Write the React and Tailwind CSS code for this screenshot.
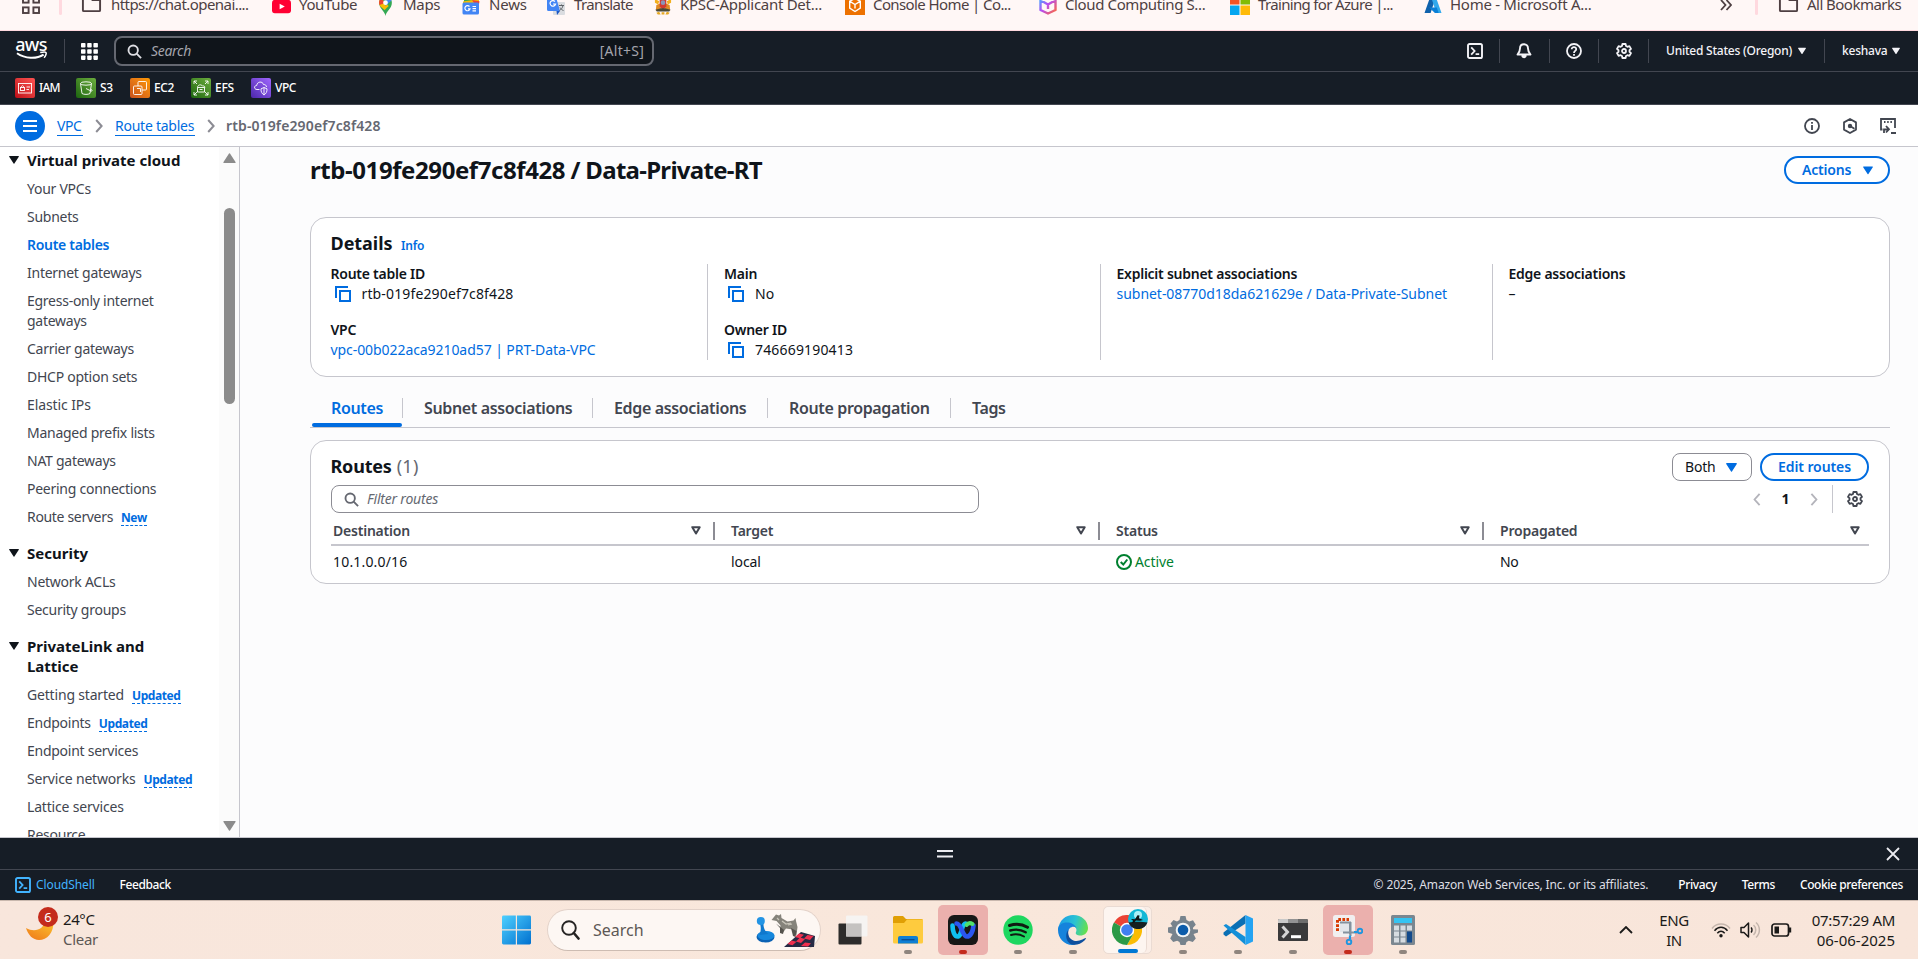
import React from "react";

/* ---------- shared icons ---------- */

function Caret({ className = "h-[8px] w-[10px]" }) {
  return (
    <svg viewBox="0 0 10 8" className={className} fill="currentColor">
      <path d="M0.6 0h8.8a0.5 0.5 0 0 1 .4.8L5.4 7.6a0.5 0.5 0 0 1-.8 0L.2.8A.5.5 0 0 1 .6 0z" />
    </svg>
  );
}

function SearchIcon({ className }) {
  return (
    <svg viewBox="0 0 16 16" className={className} fill="none" stroke="currentColor" strokeWidth="2">
      <circle cx="6.6" cy="6.6" r="5" />
      <path d="M10.3 10.3 15 15" />
    </svg>
  );
}

function ShellIcon({ className }) {
  return (
    <svg viewBox="0 0 16 16" className={className} fill="none" stroke="currentColor">
      <rect x="1" y="1" width="14" height="14" rx="1.6" strokeWidth="1.9" />
      <path d="M4.2 4.3 7.6 8l-3.4 3.7M8.6 11.2h3.6" strokeWidth="1.8" />
    </svg>
  );
}

function GearIcon({ className }) {
  return (
    <svg viewBox="0 0 16 16" className={className} fill="none" stroke="currentColor" strokeWidth="1.8" strokeLinejoin="round">
      <path d="M6.4 1h3.2l.4 2 1.400.8 2-.7 1.600 2.800L13.500 7.200v1.600l1.500 1.300-1.600 2.800-2-.7-1.400.8-.4 2H6.400L6 13l-1.400-.8-2 .7L1 10.100l1.500-1.300V7.200L1 5.900l1.600-2.800 2 .7L6 3z" />
      <circle cx="8" cy="8" r="2" />
    </svg>
  );
}

function CopyIcon() {
  return (
    <svg viewBox="0 0 16 16" className="h-[16px] w-[16px] text-[#006ce0]" fill="none" stroke="currentColor" strokeWidth="2">
      <path d="M1 12V1h12" />
      <rect x="5" y="5" width="10" height="10" />
    </svg>
  );
}

function Chevron({ className, dir = "right" }) {
  return (
    <svg viewBox="0 0 8 14" className={className} fill="none" stroke="currentColor" strokeWidth="2">
      <path d={dir === "right" ? "M1.200 1 6.600 7 1.200 13" : "M6.800 1 1.400 7 6.800 13"} />
    </svg>
  );
}

function FolderIcon({ className }) {
  return (
    <svg viewBox="0 0 22 20" className={className} fill="none" stroke="#4e3f42" strokeWidth="2" strokeLinejoin="round">
      <path d="M2 3.500A1.500 1.500 0 0 1 3.500 2H12v5H20V17.500A1 1 0 0 1 19 18.500H3A1 1 0 0 1 2 17.500z" />
    </svg>
  );
}

/* ---------- browser bookmarks ---------- */

function Bookmark({ slot, gap, track, label, children }) {
  return (
    <div className={`flex h-[20px] shrink-0 items-center ${slot}`}>
      <span className={`flex shrink-0 items-center ${gap}`}>{children}</span>
      <span className={`-ml-px -mt-[2px] whitespace-nowrap text-[15px] leading-[20px] text-[#4e3f42] ${track}`}>{label}</span>
    </div>
  );
}

function BookmarksBar() {
  return (
    <div className="h-[31px] shrink-0 overflow-hidden border-b border-[#ffd9df] bg-[#fff7f6]">
      <div className="-mt-[5px] flex h-[20px] items-center pl-[22px]">
        <svg viewBox="0 0 18 18" className="mr-[29px] h-[18px] w-[18px] shrink-0" fill="none" stroke="#4e3f42" strokeWidth="1.900">
          <rect x="1" y="1" width="5.600" height="5.600" />
          <rect x="11.400" y="1" width="5.600" height="5.600" />
          <rect x="1" y="11.400" width="5.600" height="5.600" />
          <rect x="11.400" y="11.400" width="5.600" height="5.600" />
        </svg>
        <div className="-ml-[10px] mr-[19px] h-[20px] w-[3px] shrink-0 rounded-b bg-[#ffd9df]" />
        <Bookmark slot="w-[191px]" gap="w-[31px] -mt-[4px]" track="tracking-[-0.56px]" label="https://chat.openai....">
          <FolderIcon className="h-[20px] w-[21px]" />
        </Bookmark>
        <Bookmark slot="w-[106px]" gap="w-[28px]" track="tracking-[-0.35px]" label="YouTube">
          <svg viewBox="0 0 20 14" className="mt-[2px] h-[15px] w-[19px]">
            <rect width="20" height="14" rx="3" fill="#ff0033" />
            <path d="M8 4l5.500 3L8 10z" fill="#fff" />
          </svg>
        </Bookmark>
        <Bookmark slot="w-[84px]" gap="w-[26px]" track="tracking-[-0.3px]" label="Maps">
          <svg viewBox="0 0 16 22" className="mt-[1px] h-[20px] w-[15px]">
            <path d="M8 22C7.300 17 1 14 1 7.500A7 7 0 0 1 15 7.500C15 14 8.700 17 8 22z" fill="#34a853" />
            <path d="M1 7.500A7 7 0 0 1 3 2.600L11.500 11 7 15.500 2.500 11.500A7 7 0 0 1 1 7.500z" fill="#fbbc04" />
            <path d="M3 2.600 8 7.500 1.500 10A7 7 0 0 1 3 2.600z" fill="#ea4335" />
            <path d="M8 .5A7 7 0 0 1 14.500 5L8 11z" fill="#4285f4" />
            <circle cx="8" cy="7.300" r="2.600" fill="#fff" />
          </svg>
        </Bookmark>
        <Bookmark slot="w-[85px]" gap="w-[28px]" track="tracking-[-0.2px]" label="News">
          <svg viewBox="0 0 18 18" className="mt-[1px] h-[18px] w-[18px]">
            <rect x="2" y="1" width="14" height="8" fill="#34a853" />
            <path d="M1 4.500 17 2v8H1z" fill="#fbbc04" />
            <path d="M10 3l7.500 1.200L16 12z" fill="#ea4335" />
            <rect x="0.500" y="5.500" width="16.500" height="12" rx="1.500" fill="#4285f4" />
            <path d="M7.500 9.500A2.600 2.600 0 1 0 8 11.800H6M10.500 9.500H14M10.500 11.700H14M10.500 13.900H14" stroke="#fff" strokeWidth="1.200" fill="none" />
          </svg>
        </Bookmark>
        <Bookmark slot="w-[106px]" gap="w-[28px]" track="tracking-[-0.62px]" label="Translate">
          <svg viewBox="0 0 18 18" className="mt-[1px] h-[18px] w-[18px]">
            <rect x="6" y="5" width="12" height="13" rx="1" fill="#dadce0" />
            <path d="M0 1.500A1.500 1.500 0 0 1 1.500 0H9l4 14H1.500A1.500 1.500 0 0 1 0 12.500z" fill="#4285f4" />
            <path d="M9.500 14H13l-3 4z" fill="#1a56c4" />
            <path d="M8 4.500A2.800 2.800 0 1 0 8.600 7H6" stroke="#fff" strokeWidth="1.200" fill="none" />
            <path d="M12 8.500h5M14.500 7.500v1M16 8.500c-.5 2.500-2 4-3.500 5M13 10.500c.8 1.500 2 2.500 3.500 3" stroke="#5f6368" strokeWidth="1" fill="none" />
          </svg>
        </Bookmark>
        <Bookmark slot="w-[192px]" gap="w-[28px]" track="tracking-[-0.28px]" label="KPSC-Applicant Det...">
          <svg viewBox="0 0 20 20" className="mt-[1px] h-[19px] w-[20px]">
            <path d="M1.500 3 6 5.500 5 9 1.500 7zM18.500 3 14 5.500 15 9l3.500-2z" fill="#f2b01e" />
            <path d="M3 9.500 7 8l1 6-5.500 1zM17 9.500 13 8l-1 6 5.500 1z" fill="#e08a22" />
            <path d="M6.500 3h7v8L10 15l-3.500-4z" fill="#d23a2f" />
            <circle cx="10" cy="7" r="2.400" fill="#8a94b8" />
            <path d="M2 14.500l6-1.500h4l6 1.500-1.500 1.800h-13z" fill="#4b4a38" />
            <path d="M3 17.500l3-.8 1.500 2.800h-3zM8.500 17h3v2.500h-3zM17 17.500l-3-.8-1.500 2.800h3z" fill="#e5a823" />
          </svg>
        </Bookmark>
        <Bookmark slot="w-[194px]" gap="w-[29px]" track="tracking-[-0.6px]" label="Console Home | Co...">
          <svg viewBox="0 0 20 20" className="h-[20px] w-[20px]" fill="none">
            <rect width="20" height="20" fill="#ed7100" />
            <path d="M10 3.500l5.300 2.700v7L10 16.500l-5.300-3.300v-7zM4.900 6.300 10 9.500l5.100-3.200M10 9.500v4" stroke="#fff" strokeWidth="1.400" />
          </svg>
        </Bookmark>
        <Bookmark slot="w-[191px]" gap="w-[27px]" track="tracking-[-0.38px]" label="Cloud Computing S...">
          <svg viewBox="0 0 18 20" className="h-[20px] w-[18px]" fill="none" strokeLinejoin="round">
            <defs>
              <linearGradient id="cube" x1="0" y1="0" x2="1" y2="1">
                <stop offset="0" stopColor="#3db8ff" />
                <stop offset=".45" stopColor="#b44cf5" />
                <stop offset="1" stopColor="#ff6a3d" />
              </linearGradient>
            </defs>
            <path d="M9 1.500 16.500 5v10L9 18.500 1.500 15V5zM2 5.500l7 4 7-4M9 9.500V14" stroke="url(#cube)" strokeWidth="2.400" />
          </svg>
        </Bookmark>
        <Bookmark slot="w-[194px]" gap="w-[29px]" track="tracking-[-0.66px]" label="Training for Azure |...">
          <svg viewBox="0 0 20 20" className="h-[20px] w-[20px]">
            <path d="M0 0h9.500v9.500H0z" fill="#f35325" />
            <path d="M10.500 0H20v9.500h-9.500z" fill="#81bc06" />
            <path d="M0 10.500h9.500V20H0z" fill="#05a6f0" />
            <path d="M10.500 10.500H20V20h-9.500z" fill="#ffba08" />
          </svg>
        </Bookmark>
        <Bookmark slot="w-[296px]" gap="w-[27px]" track="tracking-[-0.28px]" label="Home - Microsoft A...">
          <svg viewBox="0 0 18 18" className="h-[17px] w-[18px]">
            <path d="M6 0h6L6.500 17H0z" fill="#0f62ac" />
            <path d="M7 0h5l6 17h-5.500z" fill="#32a9ec" />
            <path d="M5 11h8l2 6h-4z" fill="#0a7fd6" />
          </svg>
        </Bookmark>
        <svg viewBox="0 0 12 12" className="mr-[23px] h-[12px] w-[12px] shrink-0" fill="none" stroke="#4e3f42" strokeWidth="1.800">
          <path d="M1 1l4.500 5L1 11M6.500 1 11 6l-4.500 5" />
        </svg>
        <div className="mr-[20px] h-[20px] w-[3px] shrink-0 rounded-b bg-[#ffd9df]" />
        <Bookmark slot="w-[140px]" gap="w-[30px] -mt-[4px]" track="tracking-[-0.53px]" label="All Bookmarks">
          <FolderIcon className="h-[20px] w-[21px]" />
        </Bookmark>
      </div>
    </div>
  );
}

/* ---------- AWS header ---------- */

function NavDivider({ className = "" }) {
  return <div className={`h-[24px] w-px shrink-0 bg-[#424650] ${className}`} />;
}

function Service({ slot, label, track, children, colors }) {
  return (
    <div className={`flex items-center gap-[4px] ${slot}`}>
      <div className={`flex h-[20px] w-[20px] shrink-0 items-center justify-center rounded-[2px] bg-linear-to-tr ${colors}`}>
        <svg viewBox="0 0 16 16" className="h-[16px] w-[16px]" fill="none" stroke="#fff" strokeWidth="0.9">
          {children}
        </svg>
      </div>
      <span className={`text-[12px] font-medium leading-[16px] text-white ${track}`}>{label}</span>
    </div>
  );
}

function AwsHeader() {
  return (
    <header className="shrink-0 bg-[#161d26] text-[#f3f3f7]">
      <div className="flex h-[41px] items-center border-b border-[#424650] pl-[15px]">
        <div className="flex w-[32px] flex-col items-center">
          <span className="-mt-[6px] text-[18px] font-medium leading-[16px] tracking-[-0.7px] text-white">aws</span>
          <svg viewBox="0 0 32 9" className="-mt-px h-[9px] w-[31px]" fill="none" stroke="#fff">
            <path d="M1 2.200c8.500 5.800 20 6.200 27.500 1.400" strokeWidth="2" />
            <path d="M25 1.500c3-.8 5.500-.7 6 0s-.3 3.500-2 5.300" strokeWidth="1.600" />
          </svg>
        </div>
        <NavDivider className="ml-[17px]" />
        <svg viewBox="0 0 17 17" className="ml-[16px] h-[17px] w-[17px]" fill="#fff">
          {[0, 6.2, 12.4].map((y) =>
            [0, 6.2, 12.4].map((x) => <rect key={`${x}-${y}`} x={x} y={y} width="4.500" height="4.500" rx=".8" />)
          )}
        </svg>
        <div className="ml-[16px] flex h-[30px] w-[540px] items-center rounded-[8px] border-2 border-[#656871] bg-[#0f141a] pl-[11px] pr-[8px]">
          <SearchIcon className="h-[15px] w-[15px] text-[#dedee3]" />
          <span className="ml-[9px] text-[14px] italic leading-[20px] tracking-[-0.3px] text-[#a4a4ad]">Search</span>
          <span className="ml-auto text-[14px] leading-[20px] tracking-[0.25px] text-[#a4a4ad]">[Alt+S]</span>
        </div>
        <ShellIcon className="ml-[813px] h-[16px] w-[16px]" />
        <NavDivider className="ml-[16px]" />
        <svg viewBox="0 0 16 16" className="ml-[16px] h-[16px] w-[16px]" fill="none" stroke="currentColor" strokeWidth="1.900" strokeLinejoin="round">
          <path d="M8 1.200c2.600 0 4 1.900 4 4.200 0 2.800.7 4 2.500 6.100h-13C3.300 9.400 4 8.200 4 5.400c0-2.300 1.400-4.200 4-4.200z" />
          <path d="M6.200 13c.2 1.600 3.400 1.600 3.600 0z" fill="currentColor" />
        </svg>
        <NavDivider className="ml-[17px]" />
        <svg viewBox="0 0 16 16" className="ml-[16px] h-[16px] w-[16px]" fill="none" stroke="currentColor" strokeWidth="1.800">
          <circle cx="8" cy="8" r="7" />
          <path d="M5.700 6.300c0-3 4.600-2.800 4.500-.1C10.200 8 8 7.800 8 9.900M8 11v1.700" />
        </svg>
        <NavDivider className="ml-[16px]" />
        <GearIcon className="ml-[17px] h-[16px] w-[16px]" />
        <NavDivider className="ml-[16px]" />
        <span className="ml-[17px] w-[132px] whitespace-nowrap text-[12px] font-medium leading-[16px] tracking-[-0.23px]">United States (Oregon)</span>
        <Caret className="h-[8px] w-[8px]" />
        <NavDivider className="ml-[18px]" />
        <span className="ml-[17px] w-[50px] text-[12px] font-medium leading-[16px] tracking-[-0.23px]">keshava</span>
        <Caret className="h-[8px] w-[8px]" />
      </div>
      <div className="flex h-[33px] items-center border-b border-[#424650] pl-[15px]">
        <Service slot="w-[61px]" label="IAM" track="tracking-[-0.8px]" colors="from-[#bd0816] to-[#ff5252]">
          <rect x="1.500" y="3.500" width="13" height="9.500" />
          <rect x="3.500" y="7.500" width="4" height="3" />
          <path d="M4.300 7.500c0-2.500 2.400-2.500 2.400 0M9.500 7h3.500M9.500 9.500h2.500" />
        </Service>
        <Service slot="w-[54px]" label="S3" track="tracking-[-0.4px]" colors="from-[#1b660f] to-[#6cae3e]">
          <ellipse cx="8" cy="3.500" rx="5.500" ry="1.700" />
          <path d="M2.500 3.500 4 13.500c2 1.200 6 1.200 8 0l1.500-10M8 8.500l5 2.500c2 .5 1-1.500-.3-2" />
        </Service>
        <Service slot="w-[61px]" label="EC2" track="tracking-[-0.4px]" colors="from-[#c8511b] to-[#ff9900]">
          <rect x="1.500" y="6" width="8.500" height="8.500" rx="1" />
          <path d="M6 6V2.500a1 1 0 0 1 1-1h6.500a1 1 0 0 1 1 1V9a1 1 0 0 1-1 1H10" />
          <path d="M5 8.500h3.500V12" />
        </Service>
        <Service slot="w-[60px]" label="EFS" track="tracking-[-0.2px]" colors="from-[#1b660f] to-[#6cae3e]">
          <path d="M1 4V1h3M12 1h3v3M15 12v3h-3M4 15H1v-3M1 1l3 3M15 1l-3 3M15 15l-3-3M1 15l3-3" />
          <path d="M4.500 7.500C4.500 5 8 3.800 9.500 6c2-.5 2.800 1 2 2M4.500 7.500h7V12h-7zM6.500 9.500h3" />
        </Service>
        <Service slot="w-[60px]" label="VPC" track="tracking-[-0.5px]" colors="from-[#4d27aa] to-[#a166ff]">
          <path d="M6.500 9.500H4C.8 9.500.8 5.500 3.700 5.500 4 1.500 9.500.8 10.500 4.500c2 0 3 1 3 2.500" />
          <path d="M8 8.800 11 7.500l3 1.300c.2 3-1 5-3 6.200-2-1.200-3.200-3.200-3-6.200zM11 7.500V15" />
        </Service>
      </div>
    </header>
  );
}

function Breadcrumbs() {
  return (
    <div className="flex h-[42px] shrink-0 items-center border-b border-[#c6c6cd] bg-white pl-[15px] text-[14px] leading-[18px]">
      <div className="flex h-[30px] w-[30px] items-center justify-center rounded-full bg-[#006ce0]">
        <svg viewBox="0 0 14 12" className="h-[12px] w-[14px]" stroke="#fff" strokeWidth="2">
          <path d="M0 1h14M0 6h14M0 11h14" />
        </svg>
      </div>
      <span className="ml-[12px] mt-px w-[26px] border-b border-[#006ce0] tracking-[-0.45px] text-[#006ce0]">VPC</span>
      <Chevron className="ml-[12px] h-[14px] w-[8px] text-[#8c8c94]" />
      <span className="ml-[12px] mt-px w-[80px] whitespace-nowrap border-b border-[#006ce0] tracking-[-0.25px] text-[#006ce0]">Route tables</span>
      <Chevron className="ml-[12px] h-[14px] w-[8px] text-[#8c8c94]" />
      <span className="ml-[11px] font-semibold tracking-[0.12px] text-[#656871]">rtb-019fe290ef7c8f428</span>
      <div className="ml-auto flex items-center gap-[22px] pr-[22px] text-[#424650]">
        <svg viewBox="0 0 16 16" className="h-[16px] w-[16px]" fill="none" stroke="currentColor" strokeWidth="1.800">
          <circle cx="8" cy="8" r="7" />
          <path d="M8 7v5M8 4v1.700" />
        </svg>
        <svg viewBox="0 0 16 16" className="h-[16px] w-[16px]" fill="none" stroke="currentColor" strokeWidth="1.800" strokeLinejoin="round">
          <path d="M8 1l6 3.400v7.200L8 15l-6-3.400V4.400z" />
          <circle cx="8" cy="8" r="2.200" fill="currentColor" stroke="none" />
          <path d="M8 8l4.500 2.700" />
        </svg>
        <svg viewBox="0 0 16 16" className="h-[16px] w-[16px]" fill="none" stroke="currentColor" strokeWidth="1.800">
          <path d="M2.500 11.500H1V1h14v9M4 4h1.500M7.200 4h1.500M10.400 4h1.500M11 15h5" />
          <path d="M4 15v-3.500h4.500M6 8l3 3.300-3 3.200" />
        </svg>
      </div>
    </div>
  );
}

/* ---------- side navigation ---------- */

function Item({ children, active, badge, track = "tracking-[-0.26px]" }) {
  return (
    <div className="mb-[8px] flex text-[14px] leading-[20px]">
      <span className={`w-fit max-w-[170px] ${active ? "font-semibold tracking-[-0.3px] text-[#006ce0]" : `text-[#424650] ${track}`}`}>{children}</span>
      {badge && (
        <span className="ml-[8px] mt-[3px] h-[16px] border-b border-dashed border-[#006ce0] text-[12px] font-bold leading-[15px] tracking-[-0.4px] text-[#006ce0]">
          {badge}
        </span>
      )}
    </div>
  );
}

function Group({ title, children, className = "", track }) {
  return (
    <section className={className}>
      <div className="flex">
        <Caret className="ml-[9px] mt-[6px] h-[8px] w-[10px] shrink-0 text-[#0f141a]" />
        <h3 className={`ml-[8px] w-[155px] whitespace-nowrap text-[15px] font-bold leading-[20px] text-[#0f141a] ${track}`}>{title}</h3>
      </div>
      <div className="mt-[9px] pl-[27px]">{children}</div>
    </section>
  );
}

function SideNav() {
  return (
    <nav className="flex w-[240px] shrink-0 overflow-hidden border-r border-[#c6c6cd] bg-white">
      <div className="w-[219px] shrink-0 pt-[3px]">
        <Group title="Virtual private cloud" track="tracking-[0.02px]">
          <Item>Your VPCs</Item>
          <Item>Subnets</Item>
          <Item active>Route tables</Item>
          <Item>Internet gateways</Item>
          <Item>
            Egress-only internet
            <br />
            gateways
          </Item>
          <Item>Carrier gateways</Item>
          <Item>DHCP option sets</Item>
          <Item track="tracking-[-0.1px]">Elastic IPs</Item>
          <Item>Managed prefix lists</Item>
          <Item>NAT gateways</Item>
          <Item>Peering connections</Item>
          <Item badge="New" track="tracking-[-0.33px]">Route servers</Item>
        </Group>
        <Group title="Security" className="mt-[16px]" track="tracking-[0px]">
          <Item>Network ACLs</Item>
          <Item>Security groups</Item>
        </Group>
        <Group title={<>PrivateLink and<br />Lattice</>} className="mt-[16px]" track="tracking-[-0.02px]">
          <Item badge="Updated" track="tracking-[-0.18px]">Getting started</Item>
          <Item badge="Updated">Endpoints</Item>
          <Item>Endpoint services</Item>
          <Item badge="Updated" track="tracking-[-0.18px]">Service networks</Item>
          <Item track="tracking-[-0.18px]">Lattice services</Item>
          <Item>Resource</Item>
        </Group>
      </div>
      <div className="flex w-[20px] shrink-0 flex-col items-center bg-[#fbfbfb] pb-[6px] pt-[6px] text-[#8b8b8b]">
        <Caret className="h-[10px] w-[13px] rotate-180" />
        <div className="mt-[45px] h-[196px] w-[11px] rounded-full bg-[#8b8b8b]" />
        <Caret className="mt-auto h-[10px] w-[13px]" />
      </div>
    </nav>
  );
}

/* ---------- main content ---------- */

function Field({ label, copy, link, children, track, labelTrack = "tracking-[-0.25px]" }) {
  return (
    <div className="h-[56px] text-[14px] leading-[20px]">
      <div className={`font-semibold text-[#0f141a] ${labelTrack}`}>{label}</div>
      <div className="flex items-center">
        {copy && (
          <span className="ml-[4px] mr-[11px]">
            <CopyIcon />
          </span>
        )}
        <span className={`whitespace-nowrap ${link ? "text-[#006ce0]" : "text-[#0f141a]"} ${track}`}>{children}</span>
      </div>
    </div>
  );
}

function Details() {
  return (
    <section className="mt-[33px] h-[160px] w-[1580px] rounded-[16px] border border-[#c6c6cd] bg-white pl-[19.5px] pt-[13px]">
      <div className="flex items-baseline">
        <h2 className="text-[18px] font-bold leading-[24px] tracking-[-0.05px] text-[#0f141a]">Details</h2>
        <span className="ml-[8.5px] text-[12px] font-semibold leading-[16px] tracking-[-0.2px] text-[#006ce0]">Info</span>
      </div>
      <div className="mt-[9px] flex h-[96px]">
        <div className="w-[376.5px]">
          <Field label="Route table ID" copy track="tracking-[0.14px]">rtb-019fe290ef7c8f428</Field>
          <Field label="VPC" link track="tracking-[-0.07px]">vpc-00b022aca9210ad57 | PRT-Data-VPC</Field>
        </div>
        <div className="w-[393px] border-l border-[#c6c6cd] pl-[16px]">
          <Field label="Main" copy track="">No</Field>
          <Field label="Owner ID" copy track="tracking-[0.17px]">746669190413</Field>
        </div>
        <div className="w-[392px] border-l border-[#c6c6cd] pl-[15.5px]">
          <Field label="Explicit subnet associations" link track="tracking-[-0.03px]">subnet-08770d18da621629e / Data-Private-Subnet</Field>
        </div>
        <div className="border-l border-[#c6c6cd] pl-[15.5px]">
          <Field label="Edge associations" track="">–</Field>
        </div>
      </div>
    </section>
  );
}

function Tab({ label, width, active, last, track = "tracking-[-0.36px]" }) {
  return (
    <div className={`flex h-[39px] flex-col ${width}`}>
      <div className={`mt-[5px] flex h-[20px] items-center whitespace-nowrap pl-[21px] ${last ? "" : "border-r border-[#c6c6cd]"}`}>
        <span className={`text-[16px] font-semibold leading-[20px] ${track} ${active ? "text-[#006ce0]" : "text-[#424650]"}`}>{label}</span>
      </div>
      {active && <div className="ml-[2px] mr-px mt-[5px] h-[4px] shrink-0 rounded-[2px] bg-[#006ce0]" />}
    </div>
  );
}

function HeadCell({ label, width, last }) {
  return (
    <div className={`flex h-[18px] items-center ${width} ${last ? "pr-[9px]" : "border-r-2 border-[#8c8c94] pr-[12px]"}`}>
      <span className="font-semibold tracking-[-0.22px] text-[#424650]">{label}</span>
      <svg viewBox="0 0 10 9" className="ml-auto h-[9px] w-[10px] text-[#424650]" fill="none" stroke="currentColor" strokeWidth="2" strokeLinejoin="round">
        <path d="M1.300 1.200h7.400L5 7.400z" />
      </svg>
    </div>
  );
}

function Routes() {
  return (
    <section className="mt-[12px] h-[144px] w-[1580px] rounded-[16px] border border-[#c6c6cd] bg-white px-[20px] pt-[12px]">
      <div className="flex h-[28px] items-center">
        <h2 className="-ml-[0.5px] -mt-[2px] text-[18px] font-bold leading-[24px] tracking-[-0.2px] text-[#0f141a]">Routes</h2>
        <span className="-mt-[2px] ml-[5px] text-[18px] leading-[24px] tracking-[0.3px] text-[#656871]">(1)</span>
        <button className="ml-auto flex h-[28px] w-[80px] items-center rounded-[8px] border border-[#8c8c94] pl-[12px] text-[14px] leading-[20px] text-[#0f141a]">
          <span className="w-[41px] text-left tracking-[-0.2px]">Both</span>
          <Caret className="h-[9px] w-[11px] text-[#006ce0]" />
        </button>
        <button className="ml-[8px] h-[28px] w-[109px] rounded-[20px] border-2 border-[#006ce0] text-[14px] font-semibold leading-[20px] tracking-[-0.1px] text-[#006ce0]">
          Edit routes
        </button>
      </div>
      <div className="mt-[4px] flex h-[28px] items-center">
        <div className="flex h-[28px] w-[648px] items-center rounded-[8px] border border-[#8c8c94] pl-[12px]">
          <SearchIcon className="h-[15px] w-[15px] text-[#656871]" />
          <span className="ml-[8px] text-[14px] italic leading-[20px] tracking-[-0.2px] text-[#656871]">Filter routes</span>
        </div>
        <Chevron dir="left" className="ml-auto h-[13px] w-[8px] text-[#b4b4bb]" />
        <span className="ml-[20px] w-[9px] text-center text-[14px] font-bold leading-[20px] text-[#0f141a]">1</span>
        <Chevron className="ml-[20px] h-[13px] w-[8px] text-[#b4b4bb]" />
        <div className="ml-[14px] h-[28px] w-px bg-[#c6c6cd]" />
        <GearIcon className="ml-[14px] mr-[6px] h-[16px] w-[16px] text-[#424650]" />
      </div>
      <div className="mt-[4px] flex h-[29px] items-center border-b-2 border-[#c6c6cd] text-[14px] leading-[20px]">
        <HeadCell label="Destination" width="w-[384px] pl-[2px]" />
        <HeadCell label="Target" width="w-[385px] pl-[16px]" />
        <HeadCell label="Status" width="w-[384px] pl-[16px]" />
        <HeadCell label="Propagated" width="w-[385px] pl-[16px]" last />
      </div>
      <div className="flex h-[32px] items-center text-[14px] leading-[20px] text-[#0f141a]">
        <span className="w-[384px] pl-[2px] tracking-[0.18px]">10.1.0.0/16</span>
        <span className="w-[385px] pl-[16px] tracking-[-0.1px]">local</span>
        <span className="flex w-[384px] items-center pl-[16px] text-[#00802f]">
          <svg viewBox="0 0 16 16" className="mr-[3px] h-[16px] w-[16px]" fill="none" stroke="currentColor" strokeWidth="2">
            <circle cx="8" cy="8" r="7" />
            <path d="M4.700 8l2.600 2.500 4-5" />
          </svg>
          <span className="tracking-[-0.08px]">Active</span>
        </span>
        <span className="pl-[16px] tracking-[-0.3px]">No</span>
      </div>
    </section>
  );
}

function Main() {
  return (
    <main className="min-w-0 flex-1 bg-[#fcfcfd] pl-[70px] pt-[9px]">
      <div className="flex h-[28px] w-[1580px] items-center">
        <h1 className="text-[24px] font-bold leading-[28px] text-[#0f141a]">
          <span className="tracking-[-0.42px]">rtb-019fe290ef7c8f428</span>
          <span className="tracking-[-0.72px]"> / Data-Private-RT</span>
        </h1>
        <button className="ml-auto flex h-[28px] w-[106px] items-center rounded-[20px] border-2 border-[#006ce0] bg-white pl-[16px] text-[14px] font-semibold leading-[20px] text-[#006ce0]">
          <span className="w-[61px] text-left tracking-[-0.2px]">Actions</span>
          <Caret className="h-[9px] w-[10px]" />
        </button>
      </div>
      <Details />
      <div className="mt-[16px] flex h-[35px] w-[1580px] border-b border-[#c6c6cd]">
        <Tab label="Routes" width="w-[93px]" active />
        <Tab label="Subnet associations" width="w-[190px]" />
        <Tab label="Edge associations" width="w-[175px]" />
        <Tab label="Route propagation" width="w-[183px]" />
        <Tab label="Tags" width="w-[80px]" last />
      </div>
      <Routes />
    </main>
  );
}

/* ---------- dark footer ---------- */

function Footer() {
  return (
    <footer className="shrink-0 bg-[#161d26]">
      <div className="flex h-[33px] items-center border-b border-t border-b-[#424650] border-t-[#c6c6cd] pl-[937px] pr-[18px]">
        <svg viewBox="0 0 16 8" className="h-[8px] w-[16px]" stroke="#ebebf0" strokeWidth="2">
          <path d="M0 1h16M0 6.500h16" />
        </svg>
        <svg viewBox="0 0 14 14" className="ml-auto h-[14px] w-[14px]" stroke="#ebebf0" strokeWidth="1.800">
          <path d="M1 1l12 12M13 1 1 13" />
        </svg>
      </div>
      <div className="flex h-[30px] items-center px-[15px] text-[12px] leading-[16px] text-[#dedee3]">
        <ShellIcon className="h-[16px] w-[16px] text-[#42b4ff]" />
        <span className="ml-[5px] w-[83.5px] tracking-[-0.1px] text-[#42b4ff]">CloudShell</span>
        <span className="font-medium tracking-[-0.4px] text-white">Feedback</span>
        <span className="ml-auto tracking-[-0.15px]">© 2025, Amazon Web Services, Inc. or its affiliates.</span>
        <span className="ml-[30px] font-medium tracking-[-0.38px] text-white">Privacy</span>
        <span className="ml-[25px] font-medium tracking-[-0.38px] text-white">Terms</span>
        <span className="ml-[25px] font-medium tracking-[-0.41px] text-white">Cookie preferences</span>
      </div>
    </footer>
  );
}

/* ---------- taskbar ---------- */

function TaskIcon({ children, tile = "", mark = "w-[8px] bg-[#8f857e]" }) {
  return (
    <div className="flex h-[58px] w-[55px] shrink-0 items-center justify-center">
      <div className={`relative flex h-[50px] w-[50px] items-center justify-center rounded-[5px] ${tile}`}>
        {children}
        <span className={`absolute bottom-[1px] h-[4px] rounded-full ${mark}`} />
      </div>
    </div>
  );
}

function Taskbar() {
  return (
    <div className="flex h-[59px] shrink-0 items-center overflow-hidden border-t border-[#c9b8ae] bg-linear-to-r from-[#f8e6dc] via-[#f9e7db] to-[#f8e5da] pl-[26px] text-[15px] text-[#1b1a19]">
      <div className="relative h-[34px] w-[37px]">
        <svg viewBox="0 0 28 20" className="absolute left-0 top-[8px] h-[20px] w-[28px]">
          <defs>
            <linearGradient id="moon" x1="1" y1="0" x2="0.300" y2="1">
              <stop offset="0" stopColor="#fcc62f" />
              <stop offset="1" stopColor="#f0801c" />
            </linearGradient>
          </defs>
          <path d="M0 7C9 12 18 8 19 0h8.500C28 12 21 19 13 19 7 19 2 14 0 7z" fill="url(#moon)" />
        </svg>
        <span className="absolute -top-[6px] left-[12px] flex h-[20px] w-[20px] items-center justify-center rounded-full bg-[#c42b1c] text-[13px] leading-[16px] text-white">6</span>
      </div>
      <div className="-mt-[2px] w-[439px] leading-[20.5px]">
        <div className="tracking-[-0.4px]">24°C</div>
        <div className="-tracking-[0.3px] text-[#5d5855]">Clear</div>
      </div>
      <svg viewBox="0 0 30 30" className="h-[30px] w-[29px]">
        <defs>
          <linearGradient id="win" x1="0" y1="0" x2="1" y2="1">
            <stop offset="0" stopColor="#4fd0ff" />
            <stop offset="1" stopColor="#0070cf" />
          </linearGradient>
        </defs>
        <path d="M1.500 0H14.300V14.300H0V1.500A1.500 1.500 0 0 1 1.500 0zM15.500 0H28.500A1.500 1.500 0 0 1 30 1.500V14.300H15.500zM0 15.500H14.300V30H1.500A1.500 1.500 0 0 1 0 28.500zM15.500 15.500H30V28.500A1.500 1.500 0 0 1 28.500 30H15.500z" fill="url(#win)" />
      </svg>
      <div className="ml-[16px] mr-[4px] flex h-[42px] w-[274px] items-center rounded-full border border-[#e3d2c9] border-b-[#cdbcb2] bg-[#fdf7f3] pl-[13px] pr-[3px]">
        <svg viewBox="0 0 19 20" className="h-[20px] w-[19px]" fill="none" stroke="#252322">
          <circle cx="8" cy="8" r="6.800" strokeWidth="1.900" />
          <path d="M12.800 13 17.500 18.500" strokeWidth="2.600" strokeLinecap="round" />
        </svg>
        <span className="ml-[13px] text-[16px] leading-[20px] text-[#5d5855]">Search</span>
        <svg viewBox="0 0 62 36" className="ml-auto mt-[1px] h-[36px] w-[62px]">
          <ellipse cx="10.500" cy="24" rx="9" ry="5.500" fill="#0b62b4" />
          <ellipse cx="11" cy="22.500" rx="8.500" ry="4.500" fill="#1687dc" />
          <path d="M4 9c2 3 2.500 7 .5 13l9-1C9 18 8 13 8.500 8z" fill="#0f78cd" />
          <circle cx="5.800" cy="8" r="4" fill="#2394e4" />
          <path d="M21 1.500l3 1 2-1.500.5 4 6 3.500 6-1 2-2.500.5 3 1.500 6-1 8-3-1-.5-4.500-7-1-3 4-3-1 .5-6-4-4.500-5-1z" fill="#85837b" />
          <path d="M21 10.500l4 4.500v5l3 1 1-4M36 15l2 8 2.500 1 1-6" fill="#55534d" />
          <path d="M27 8l4 3 5-1M22 5l2 2M33 12l4-1" stroke="#c9c6bb" strokeWidth="1.200" fill="none" />
          <path d="M29 34 46 19l14 4-1 11z" fill="#262a44" />
          <path d="M32.500 31l4-3.500 5 1.200-4 3.600zM41 28.500l4-4 5 1.500-4 4zM40 24l4-3.500 5 1.200-4 3.600zM49 25.500l3.500-3.500 6 1-3.500 4zM46 33l4-3.500 6 .8-3 3.200z" fill="#f0304f" />
        </svg>
      </div>
      <TaskIcon mark="hidden">
        <svg viewBox="0 0 30 30" className="h-[30px] w-[30px]">
          <rect x="0.500" y="8.500" width="23" height="21" rx="1" fill="#2d2c2b" />
          <rect x="8" y="0.500" width="21.500" height="21" rx="1" fill="#f5f4f3" fillOpacity=".93" />
          <rect x="8" y="8.500" width="15.500" height="13" fill="#c4c2c0" />
        </svg>
      </TaskIcon>
      <TaskIcon>
        <svg viewBox="0 0 30 30" className="h-[30px] w-[30px]">
          <path d="M0 2.500A1.500 1.500 0 0 1 1.500 1H10l3 3h15.500A1.500 1.500 0 0 1 30 5.500V10H0z" fill="#e09f05" />
          <path d="M0 8h11l3-3.500h16V27a1.500 1.500 0 0 1-1.500 1.500h-27A1.500 1.500 0 0 1 0 27z" fill="#fecb3e" />
          <path d="M5 28.500V23a2 2 0 0 1 2-2h16a2 2 0 0 1 2 2v5.500z" fill="#0f7fd4" />
          <path d="M8.500 24.700h13" stroke="#0a4f94" strokeWidth="1.400" />
        </svg>
      </TaskIcon>
      <TaskIcon tile="bg-[#ebb0ad]" mark="w-[8px] bg-[#c42b1c]">
        <svg viewBox="0 0 30 30" className="h-[30px] w-[30px]" fill="none" strokeLinecap="round">
          <rect width="30" height="30" rx="6" fill="#171717" />
          <path d="M4.500 10.500C4.500 16 6.500 21.500 9.500 21.500c4.500 0 4-13 8-13" stroke="#0fc0f0" strokeWidth="4.600" />
          <path d="M8.500 8.500c5 0 5.500 13 10.500 13 3.500 0 6-5 6.500-11" stroke="#2b57f0" strokeWidth="4.600" />
          <path d="M18.500 10c1.500-1.800 4-2.200 6-1" stroke="#4fe06c" strokeWidth="4" />
        </svg>
      </TaskIcon>
      <TaskIcon>
        <svg viewBox="0 0 30 30" className="h-[30px] w-[30px]" fill="none" stroke="#101a12" strokeLinecap="round">
          <circle cx="15" cy="15" r="14.700" fill="#1ed760" stroke="none" />
          <path d="M6.500 10.500c6-1.800 13-1.200 18 1.800" strokeWidth="3" />
          <path d="M7.200 15.500c5-1.500 11-.9 15.500 1.800" strokeWidth="2.400" />
          <path d="M8 20c4.300-1.200 9-.7 13 1.500" strokeWidth="1.900" />
        </svg>
      </TaskIcon>
      <TaskIcon>
        <svg viewBox="0 0 30 30" className="h-[30px] w-[30px]">
          <defs>
            <linearGradient id="edgeTop" x1="0" y1="0.300" x2="1" y2="0.500">
              <stop offset="0" stopColor="#1a9be8" />
              <stop offset=".55" stopColor="#2bc3d2" />
              <stop offset="1" stopColor="#66e04d" />
            </linearGradient>
          </defs>
          <path d="M0 15C1 5 8 0 15 0c9 0 15 6 15 13 0 5-4 7.500-7.500 7.500S17 19 18 17c1.500-2.500-.5-6-4-6-6 0-13 4-14 4z" fill="url(#edgeTop)" />
          <path d="M0 15C0 10 4 7.500 9 7.500c4 0 8 2 9.500 5.500C16 10.500 10 12 10 18c0 6 5 10.500 8 11.500C8 32 0 24 0 15z" fill="#1583dc" />
          <path d="M10.500 15c-2 8 5 12.500 11 10.500 2-.6 4-1.600 5.500-2.300C28.500 22.500 28 24 26.500 25.500 23 29 18 30.500 14 29.500 7 27 7 18 10.500 15z" fill="#0e4f9e" />
        </svg>
      </TaskIcon>
      <div className="flex h-[58px] w-[55px] shrink-0 items-center">
        <div className="ml-[3px] flex h-[48px] w-[49px] rounded-[5px] border border-[#eadbd3] bg-[#fbeee7]">
          <div className="relative flex h-[46px] w-[43px] shrink-0 items-center justify-center rounded-[5px] border-r border-[#eadbd3] bg-[#fdf5f0]">
            <svg viewBox="0 0 30 30" className="ml-[4px] h-[30px] w-[30px]">
              <path d="M15 15 2 7.500A15 15 0 0 1 28 7.500z" fill="#ea4335" />
              <path d="M28 7.500A15 15 0 0 1 15 30l6.500-11V7.500z" fill="#fbbc04" />
              <path d="M2 7.500A15 15 0 0 0 15 30l6.500-11.200L15 15z" fill="#2b9a47" />
              <circle cx="15" cy="15" r="7.200" fill="#fff" />
              <circle cx="15" cy="15" r="5.800" fill="#3f7ff0" />
            </svg>
            <svg viewBox="0 0 20 20" className="absolute left-[24px] top-[2px] h-[20px] w-[20px]">
              <circle cx="10" cy="10" r="10" fill="#12b8d6" />
              <circle cx="10" cy="6" r="4" fill="#a9f0f7" />
              <path d="M.6 13.500C6 12.500 14 12.500 19.400 13.500A10 10 0 0 1 .6 13.500z" fill="#162022" />
              <path d="M3 10l4 .3 2.500-4 2 .3-.5 2.700 4 1.700-3 .8-4-.2-2 2.200-2 .4 1-2.500z" fill="#0e1314" />
            </svg>
            <span className="absolute bottom-[0px] left-[14px] h-[4px] w-[20px] rounded-full bg-[#0078d4]" />
          </div>
        </div>
      </div>
      <TaskIcon>
        <svg viewBox="0 0 30 30" className="h-[30px] w-[30px]">
          <path d="M12.500 1h5l1 4 2.700 1.500L25 5.300l2.800 4.500-2.800 3v1.500l5 .2v3l-4.500 1.500 2.300 4.500-3 3.500-4-1.300-2.300 1.300-1 3h-5l-1-3-2.300-1.300-4 1.300-3-3.500 2.300-4.500L0 17.500v-5l4.500-1-2-3L5.500 5l3.500 1.500L11.500 5z" fill="#77838d" />
          <circle cx="15" cy="15" r="7.300" fill="#f2f5f7" />
          <circle cx="15" cy="15" r="5.300" fill="#0b5cab" />
        </svg>
      </TaskIcon>
      <TaskIcon>
        <svg viewBox="0 0 30 30" className="h-[30px] w-[30px]">
          <path d="M22.500 0v8.500L3 21.500.5 19.500v-2z" fill="#0a6fb4" />
          <path d="M.5 10.500 3 9l19.500 13v8z" fill="#138fd8" />
          <path d="M22.500 0 30 3.500v23L22.500 30z" fill="#24a3f2" />
        </svg>
      </TaskIcon>
      <TaskIcon>
        <svg viewBox="0 0 30 22" className="h-[22px] w-[30px]">
          <rect width="30" height="22" rx="1.500" fill="#3a3a3b" />
          <path d="M0 4V1.500A1.500 1.500 0 0 1 1.500 0H10v4z" fill="#c9c9c9" />
          <path d="M10 0h10v4H10z" fill="#939393" />
          <path d="M20 0h8.500A1.500 1.500 0 0 1 30 1.500V4H20z" fill="#6d6d6d" />
          <path d="M4.500 7.500l5 5.500-5 5.500" stroke="#d4d4d4" strokeWidth="3" fill="none" />
          <path d="M13 17.700h10" stroke="#fff" strokeWidth="3" />
        </svg>
      </TaskIcon>
      <TaskIcon tile="bg-[#ebb0ad]" mark="w-[8px] bg-[#c42b1c]">
        <svg viewBox="0 0 30 30" className="h-[30px] w-[30px]" fill="none">
          <rect width="22" height="22" rx="2.500" fill="#f1eff0" />
          <rect x="7" y="7" width="10" height="10" fill="#e2e6ea" />
          <path d="M4.500 16V4.500H16" stroke="#d83b01" strokeWidth="3" strokeDasharray="2.700 1.400" />
          <path d="M7 7.500h10v12M17.500 7v14M10 17.500h14" stroke="#84929e" strokeWidth="2" />
          <circle cx="27" cy="16" r="2.300" stroke="#1e96e0" strokeWidth="1.900" />
          <circle cx="16" cy="27" r="2.300" stroke="#1e96e0" strokeWidth="1.900" />
          <path d="M17 24v-3.500M24.500 17H21" stroke="#1e96e0" strokeWidth="2.200" />
        </svg>
      </TaskIcon>
      <TaskIcon>
        <svg viewBox="0 0 24 30" className="h-[30px] w-[24px]">
          <rect width="24" height="30" rx="1.500" fill="#7b8790" />
          <rect x="3" y="3" width="18" height="5" fill="#35c4f2" />
          <path d="M3 10.500h5v5H3zM9.500 10.500h5v5h-5zM16 10.500h5v5h-5zM3 16.500h5v5H3zM9.500 16.500h5v5h-5zM3 22.500h5v5H3zM9.500 22.500h5v5h-5z" fill="#d6dce1" />
          <rect x="16" y="16.500" width="5" height="11" fill="#124a8c" />
        </svg>
      </TaskIcon>
      <svg viewBox="0 0 14 8" className="ml-[189px] h-[8px] w-[14px] shrink-0" fill="none" stroke="#1b1a19" strokeWidth="1.800">
        <path d="M1 7l6-6 6 6" />
      </svg>
      <div className="ml-[25px] w-[32px] shrink-0 text-center leading-[20.5px] tracking-[-0.4px]">
        <div>ENG</div>
        <div>IN</div>
      </div>
      <svg viewBox="0 0 20 16" className="ml-[21px] h-[16px] w-[20px] shrink-0" fill="none" stroke="#1b1a19" strokeWidth="1.500">
        <path d="M1 6.500C5.500.5 14.500.5 19 6.500" stroke="#c5b6ad" />
        <path d="M3.500 8.800c3.700-4.600 9.300-4.600 13 0M6.300 11.200c2.200-2.600 5.200-2.600 7.400 0" />
        <circle cx="10" cy="13.700" r="1.700" fill="#1b1a19" stroke="none" />
      </svg>
      <svg viewBox="0 0 22 18" className="ml-[9px] h-[18px] w-[22px] shrink-0" fill="none" stroke="#1b1a19" strokeWidth="1.500" strokeLinejoin="round">
        <path d="M1 6.500h3L8.500 2v14L4 11.500H1z" />
        <path d="M11 6.500c1.300 1.300 1.300 3.700 0 5" />
        <path d="M13.500 4c3 2.500 3 7.500 0 10M16 1.500c4.500 4 4.500 11 0 15" stroke="#c5b6ad" />
      </svg>
      <svg viewBox="0 0 21 14" className="ml-[9px] h-[14px] w-[21px] shrink-0" fill="none" stroke="#1b1a19" strokeWidth="1.700">
        <rect x="1" y="1" width="16.500" height="12" rx="2.500" />
        <rect x="3.500" y="3.500" width="4.500" height="7" fill="#1b1a19" stroke="none" />
        <path d="M19 4.500v5" strokeWidth="2.400" />
      </svg>
      <div className="w-[103px] shrink-0 whitespace-nowrap text-right leading-[20.5px]">
        <div className="tracking-[-0.3px]">07:57:29 AM</div>
        <div>06-06-2025</div>
      </div>
    </div>
  );
}

export default function App() {
  return (
    <div className="flex h-[959px] w-[1918px] flex-col overflow-hidden bg-white font-['Noto_Sans',sans-serif]">
      <BookmarksBar />
      <AwsHeader />
      <Breadcrumbs />
      <div className="flex min-h-0 flex-1">
        <SideNav />
        <Main />
      </div>
      <Footer />
      <Taskbar />
    </div>
  );
}
